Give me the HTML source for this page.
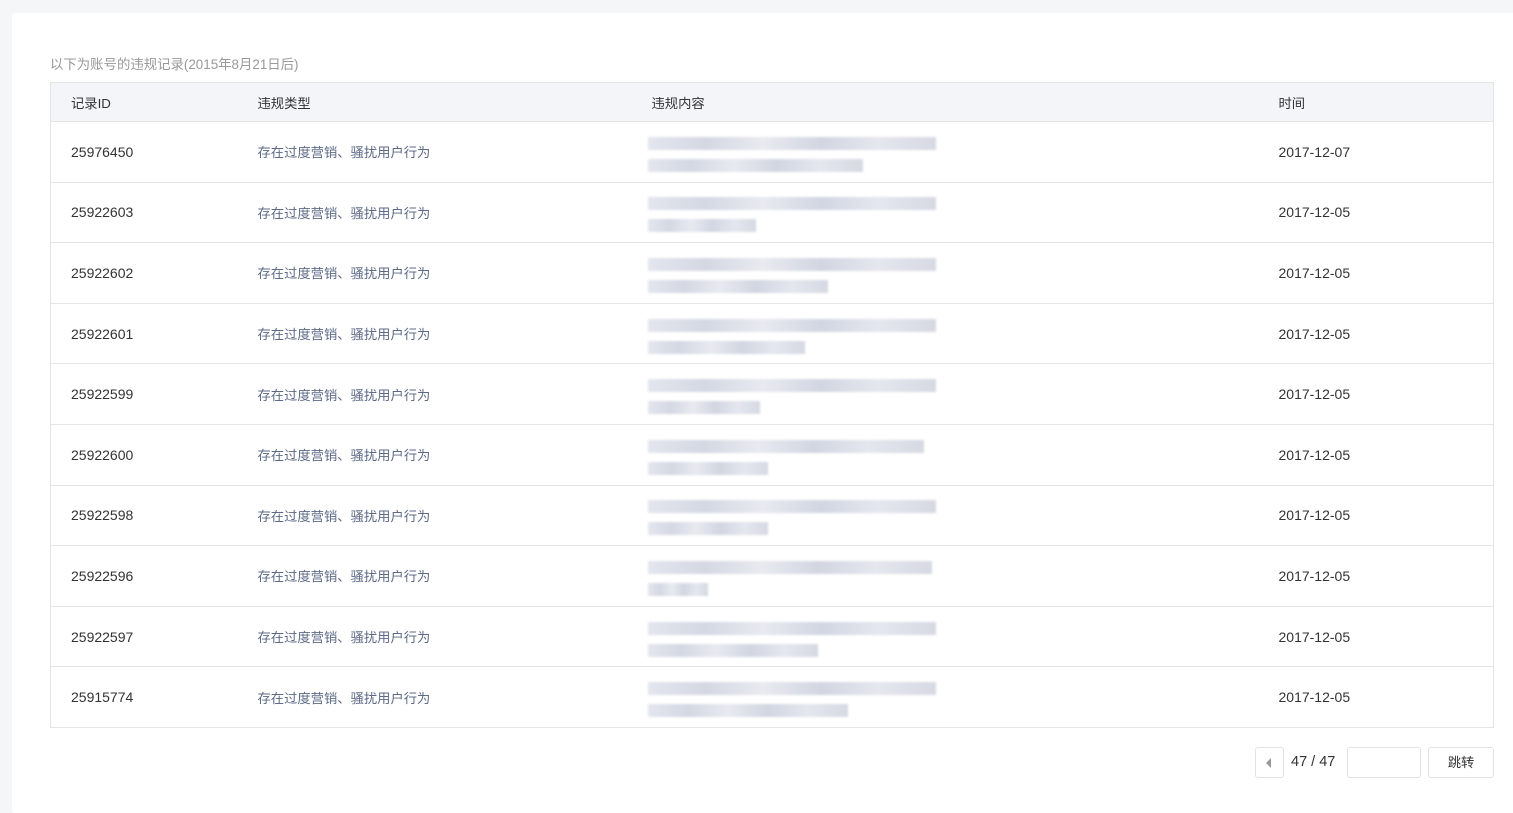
<!DOCTYPE html>
<html><head><meta charset="utf-8"><style>
*{margin:0;padding:0;box-sizing:border-box}
body{width:1513px;height:807px;background:#f5f6f8;font-family:"Liberation Sans","Noto Sans CJK SC",sans-serif;overflow:hidden;position:relative}
.card{position:absolute;left:12px;top:13px;width:1510px;height:800px;background:#fff;border-radius:3px}
.note{position:absolute;left:50px;top:53px;font-size:13.4px;color:#999}
table{position:absolute;left:50px;top:82px;width:1444px;border-collapse:collapse;border:1px solid #e5e5e5;font-size:14px;color:#333}
th{height:39px;background:#f4f5f9;font-weight:normal;text-align:left;border-bottom:1px solid #e5e5e5;font-size:13.3px}
td{height:60.6px;border-bottom:1px solid #e5e5e5;vertical-align:middle}
th:first-child,td:first-child{padding-left:20px;width:207px}
.c2{width:394px}.c3{width:627px}
td.t{color:#5d6a87;font-size:13.3px}
.blur{position:relative;height:44px;width:290px;margin-left:-4px}
.blur i{position:absolute;left:0;height:13px;background:linear-gradient(90deg,#e3e6ee,#d4d8e3 20%,#e8eaf0 40%,#d2d6e2 60%,#e4e7ee 80%,#d6d9e3);filter:blur(1px)}
.pg{position:absolute;top:747px;height:31px;border:1px solid #e2e2e2;border-radius:3px;background:#fff}
</style></head><body>
<div class="card"></div>
<div class="note">以下为账号的违规记录(2015年8月21日后)</div>
<table>
<tr><th>记录ID</th><th class="c2">违规类型</th><th class="c3">违规内容</th><th>时间</th></tr>
<tr><td>25976450</td><td class="t">存在过度营销、骚扰用户行为</td><td><div class="blur"><i style="top:7px;width:288px"></i><i style="top:29px;width:215px"></i></div></td><td>2017-12-07</td></tr>
<tr><td>25922603</td><td class="t">存在过度营销、骚扰用户行为</td><td><div class="blur"><i style="top:7px;width:288px"></i><i style="top:29px;width:108px"></i></div></td><td>2017-12-05</td></tr>
<tr><td>25922602</td><td class="t">存在过度营销、骚扰用户行为</td><td><div class="blur"><i style="top:7px;width:288px"></i><i style="top:29px;width:180px"></i></div></td><td>2017-12-05</td></tr>
<tr><td>25922601</td><td class="t">存在过度营销、骚扰用户行为</td><td><div class="blur"><i style="top:7px;width:288px"></i><i style="top:29px;width:157px"></i></div></td><td>2017-12-05</td></tr>
<tr><td>25922599</td><td class="t">存在过度营销、骚扰用户行为</td><td><div class="blur"><i style="top:7px;width:288px"></i><i style="top:29px;width:112px"></i></div></td><td>2017-12-05</td></tr>
<tr><td>25922600</td><td class="t">存在过度营销、骚扰用户行为</td><td><div class="blur"><i style="top:7px;width:276px"></i><i style="top:29px;width:120px"></i></div></td><td>2017-12-05</td></tr>
<tr><td>25922598</td><td class="t">存在过度营销、骚扰用户行为</td><td><div class="blur"><i style="top:7px;width:288px"></i><i style="top:29px;width:120px"></i></div></td><td>2017-12-05</td></tr>
<tr><td>25922596</td><td class="t">存在过度营销、骚扰用户行为</td><td><div class="blur"><i style="top:7px;width:284px"></i><i style="top:29px;width:60px"></i></div></td><td>2017-12-05</td></tr>
<tr><td>25922597</td><td class="t">存在过度营销、骚扰用户行为</td><td><div class="blur"><i style="top:7px;width:288px"></i><i style="top:29px;width:170px"></i></div></td><td>2017-12-05</td></tr>
<tr><td>25915774</td><td class="t">存在过度营销、骚扰用户行为</td><td><div class="blur"><i style="top:7px;width:288px"></i><i style="top:29px;width:200px"></i></div></td><td>2017-12-05</td></tr>
</table>
<div class="pg" style="left:1255px;width:29px"><div style="position:absolute;left:10px;top:10px;width:0;height:0;border-top:5px solid transparent;border-bottom:5px solid transparent;border-right:5px solid #999"></div></div>
<div style="position:absolute;left:1291px;top:754px;font-size:14.5px;color:#333">47 / 47</div>
<div class="pg" style="left:1347px;width:74px"></div>
<div class="pg" style="left:1428px;width:66px;font-size:13.3px;color:#333;text-align:center;line-height:29px">跳转</div>
</body></html>
